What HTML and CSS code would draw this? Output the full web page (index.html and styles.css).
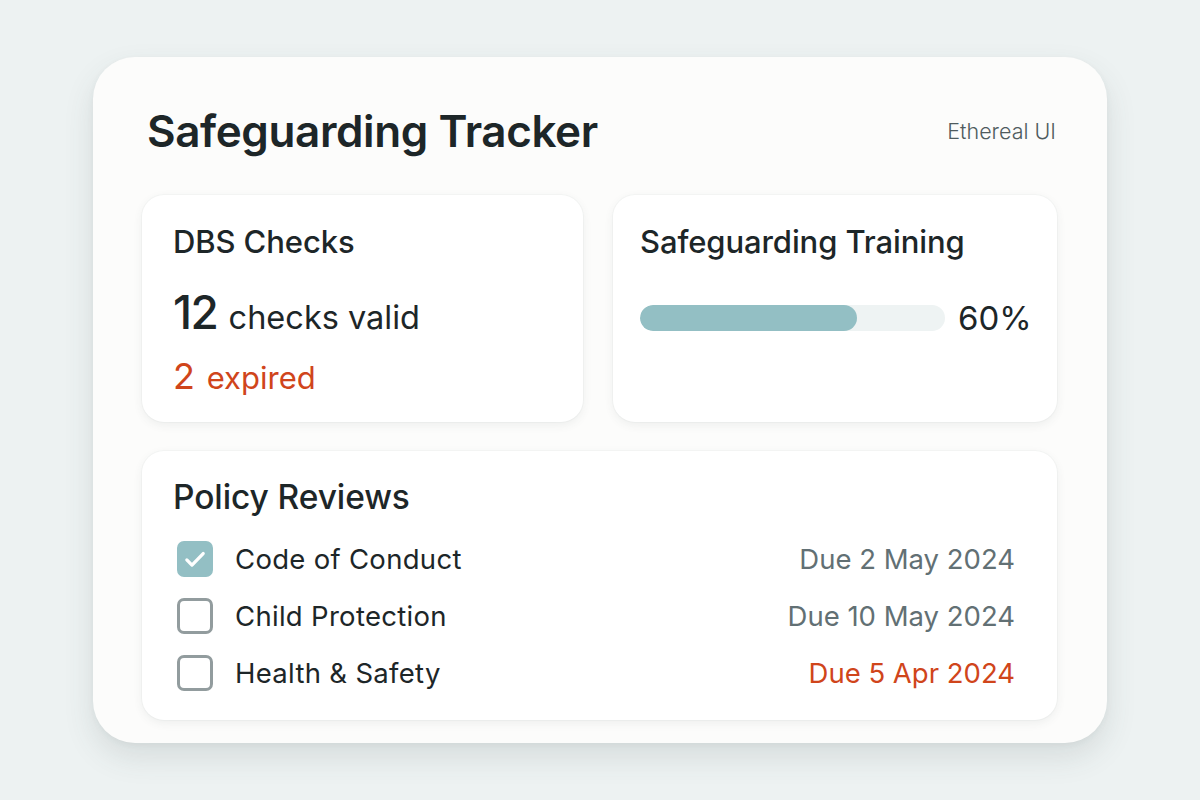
FILE: index.html
```html
<!DOCTYPE html>
<html lang="en">
<head>
    <meta charset="UTF-8">
    <meta name="viewport" content="width=device-width, initial-scale=1.0">
    <title>Safeguarding Tracker</title>
    <link rel="stylesheet" href="styles.css">
</head>
<body>
    <div class="tracker">
        <div class="header">
            <h1 class="title">Safeguarding Tracker</h1>
            <span class="brand">Ethereal UI</span>
        </div>

        <div class="top-row">
            <div class="panel">
                <h2 class="panel-title">DBS Checks</h2>
                <div class="stat"><span class="stat-num">12</span> checks valid</div>
                <div class="stat stat-bad"><span class="stat-num-sm">2</span> expired</div>
            </div>
            <div class="panel">
                <h2 class="panel-title">Safeguarding Training</h2>
                <div class="progress-row">
                    <div class="progress">
                        <div class="progress-fill" style="width: 71%"></div>
                    </div>
                    <span class="progress-label">60%</span>
                </div>
            </div>
        </div>

        <div class="panel policies">
            <h2 class="panel-title policies-title">Policy Reviews</h2>
            <ul class="policy-list">
                <li class="policy">
                    <span class="check done">
                        <svg viewBox="0 0 24 24" width="28" height="28"><path d="M5 12.8l4.4 4.4L19 7.3" fill="none" stroke="#fff" stroke-width="2.8" stroke-linecap="round" stroke-linejoin="round"/></svg>
                    </span>
                    <span class="policy-name">Code of Conduct</span>
                    <span class="due">Due 2 May 2024</span>
                </li>
                <li class="policy">
                    <span class="check"></span>
                    <span class="policy-name">Child Protection</span>
                    <span class="due">Due 10 May 2024</span>
                </li>
                <li class="policy">
                    <span class="check"></span>
                    <span class="policy-name">Health &amp; Safety</span>
                    <span class="due overdue">Due 5 Apr 2024</span>
                </li>
            </ul>
        </div>
    </div>
</body>
</html>
```

FILE: styles.css
```css
body {
    margin: 0;
    min-height: 100vh;
    display: flex;
    align-items: center;
    justify-content: center;
    background: #edf2f2;
    font-family: Inter, "Noto Sans", sans-serif;
    color: #1d2628;
}

.tracker {
    width: 1014px;
    box-sizing: border-box;
    padding: 42px 50px 23px 49px;
    background: #fcfcfb;
    border-radius: 42px;
    box-shadow: 0 14px 30px rgba(60, 80, 80, 0.13), 0 2px 6px rgba(60, 80, 80, 0.05);
}

.header {
    display: flex;
    justify-content: space-between;
    align-items: center;
    margin-bottom: 32px;
    padding-left: 5px;
}

.title {
    margin: 0;
    font-size: 44px;
    font-weight: 600;
    letter-spacing: -0.4px;
    line-height: 64px;
}

.brand {
    font-size: 21.5px;
    font-weight: 300;
    color: #4f5b5e;
    margin-right: 1px;
}

.top-row {
    display: grid;
    grid-template-columns: 441px 444px;
    gap: 30px;
    margin-bottom: 29px;
}

.panel {
    background: #ffffff;
    border-radius: 22px;
    box-shadow: 0 3px 10px rgba(60, 80, 80, 0.08), 0 0 0 1px rgba(60, 80, 80, 0.03);
    padding: 26px 31px;
    height: 227px;
    box-sizing: border-box;
}

.panel:nth-child(2) {
    padding: 26px 20px 26px 27px;
}

.panel-title {
    margin: 0;
    font-size: 31px;
    font-weight: 500;
    line-height: 42px;
    letter-spacing: -0.1px;
}

.stat {
    font-size: 32.5px;
    margin-top: 24px;
    line-height: 50px;
}

.stat-num {
    font-size: 46px;
    font-weight: 500;
    letter-spacing: -1.5px;
    margin-right: 2px;
}

.stat-bad {
    color: #d0451b;
    font-size: 31px;
    margin-top: 8px;
}

.stat-num-sm {
    font-size: 36px;
    margin-right: 3px;
}

.progress-row {
    display: flex;
    align-items: center;
    gap: 13px;
    margin-top: 35px;
}

.progress {
    flex-shrink: 0;
    width: 305px;
    height: 26px;
    background: #eef3f3;
    border-radius: 13px;
    overflow: hidden;
}

.progress-fill {
    height: 100%;
    background: #93bfc4;
    border-radius: 13px;
}

.progress-label {
    font-size: 33px;
}

.policies {
    height: 269px;
    padding-top: 25px;
    padding-right: 42px;
}

.policies-title {
    font-size: 33.5px;
    margin-bottom: 12px;
}

.policy-list {
    list-style: none;
    margin: 0;
    padding: 0 0 0 4px;
}

.policy {
    display: flex;
    align-items: center;
    height: 57px;
    font-size: 27.5px;
}

.check {
    width: 36px;
    height: 36px;
    box-sizing: border-box;
    border: 3px solid #929c9e;
    border-radius: 7px;
    margin-right: 22px;
    display: flex;
    align-items: center;
    justify-content: center;
}

.check.done {
    background: #93bfc4;
    border-color: #93bfc4;
}

.policy-name {
    flex: 1;
    letter-spacing: 0.3px;
}

.due {
    color: #627074;
}

.due.overdue {
    color: #d0451b;
}
```
